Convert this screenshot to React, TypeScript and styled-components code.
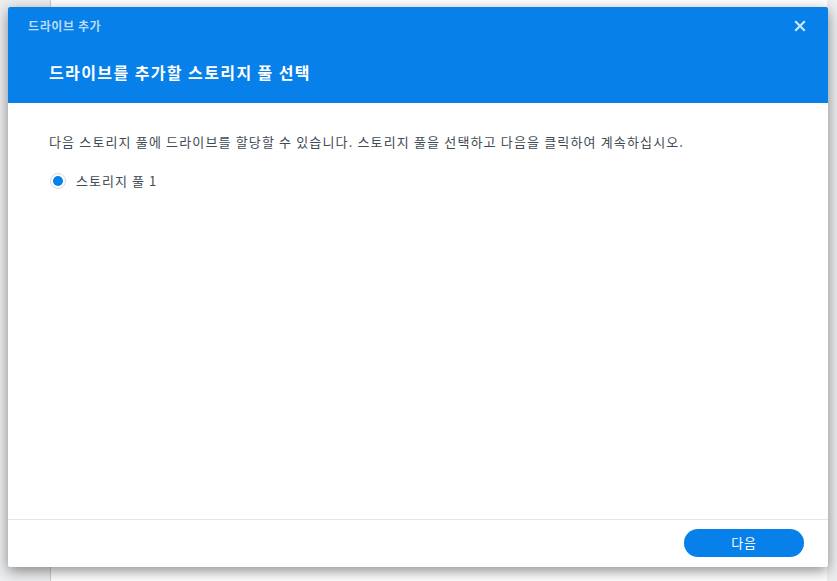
import React from "react";
import styled, { createGlobalStyle } from "styled-components";

const Global = createGlobalStyle`
  html, body { margin: 0; padding: 0; }
  body {
    width: 837px;
    height: 581px;
    overflow: hidden;
    background: #f2f3f4;
    font-family: "Noto Sans CJK KR", "Noto Sans", sans-serif;
  }
`;

const Desktop = styled.div`
  position: relative;
  width: 837px;
  height: 581px;
  overflow: hidden;
  background: #eceef0;
`;

const BackPanel = styled.div`
  position: absolute;
  left: 50px;
  top: 0;
  right: 10px;
  bottom: 0;
  background: #ffffff;
  border-left: 1px solid #c9ced4;
`;

const Dialog = styled.div`
  position: absolute;
  left: 8px;
  top: 7px;
  width: 820px;
  height: 560px;
  background: #ffffff;
  border-radius: 2px;
  box-shadow: 0 4px 14px rgba(0, 0, 0, 0.45);
  display: flex;
  flex-direction: column;
  overflow: hidden;
`;

const Header = styled.div`
  height: 96px;
  background: #0780e9;
  display: flex;
  flex-direction: column;
  box-sizing: border-box;
  padding: 10px 20px 0 20px;
`;

const TopRow = styled.div`
  display: flex;
  align-items: center;
  justify-content: space-between;
  height: 17px;
`;

const WindowTitle = styled.div`
  font-size: 12px;
  font-weight: 700;
  color: rgba(255, 255, 255, 0.72);
  line-height: 17px;
  letter-spacing: 0.6px;
`;

const CloseButton = styled.div`
  width: 14px;
  height: 14px;
  display: flex;
  align-items: center;
  justify-content: center;
  margin-right: 1px;
  margin-top: 1px;
`;

const Heading = styled.div`
  margin-top: 27px;
  margin-left: 21px;
  font-size: 16px;
  font-weight: 700;
  color: #ffffff;
  line-height: 22px;
  letter-spacing: 1.4px;
`;

const Body = styled.div`
  flex: 1;
  padding: 29px 41px 0 41px;
  display: flex;
  flex-direction: column;
`;

const Description = styled.div`
  font-size: 13px;
  color: #414b55;
  line-height: 20px;
  letter-spacing: 1.15px;
  white-space: nowrap;
`;

const RadioRow = styled.label`
  display: flex;
  align-items: center;
  gap: 10px;
  margin-top: 19px;
  margin-left: 1px;
`;

const RadioCircle = styled.span<{ checked: boolean }>`
  width: 16px;
  height: 16px;
  box-sizing: border-box;
  border-radius: 50%;
  border: 1px solid #d5dbe1;
  background: #ffffff;
  display: flex;
  align-items: center;
  justify-content: center;
  &::after {
    content: "";
    width: 10px;
    height: 10px;
    border-radius: 50%;
    background: ${(p) => (p.checked ? "#0780e9" : "transparent")};
  }
`;

const RadioLabel = styled.span`
  font-size: 13px;
  color: #414b55;
  line-height: 20px;
  letter-spacing: 1.05px;
`;

const Footer = styled.div`
  height: 48px;
  border-top: 1px solid #e3e6e9;
  box-sizing: border-box;
  display: flex;
  align-items: center;
  justify-content: flex-end;
  padding: 0 24px 2px 0;
`;

const PrimaryButton = styled.button`
  width: 120px;
  height: 28px;
  border: none;
  border-radius: 14px;
  background: #0780e9;
  color: #ffffff;
  font-family: "Noto Sans CJK KR", "Noto Sans", sans-serif;
  font-size: 13px;
  line-height: 28px;
  letter-spacing: 0.8px;
  padding: 0;
  cursor: pointer;
`;

export default function App() {
  const [checked] = React.useState(true);
  return (
    <Desktop>
      <Global />
      <BackPanel />
      <Dialog>
        <Header>
          <TopRow>
            <WindowTitle>드라이브 추가</WindowTitle>
            <CloseButton>
              <svg width="12" height="12" viewBox="0 0 12 12">
                <path
                  d="M2 2 L10 10 M10 2 L2 10"
                  stroke="rgba(255,255,255,0.8)"
                  strokeWidth="2.2"
                  strokeLinecap="square"
                />
              </svg>
            </CloseButton>
          </TopRow>
          <Heading>드라이브를 추가할 스토리지 풀 선택</Heading>
        </Header>
        <Body>
          <Description>
            다음 스토리지 풀에 드라이브를 할당할 수 있습니다. 스토리지 풀을 선택하고 다음을 클릭하여 계속하십시오.
          </Description>
          <RadioRow>
            <RadioCircle checked={checked} />
            <RadioLabel>스토리지 풀 1</RadioLabel>
          </RadioRow>
        </Body>
        <Footer>
          <PrimaryButton>다음</PrimaryButton>
        </Footer>
      </Dialog>
    </Desktop>
  );
}
